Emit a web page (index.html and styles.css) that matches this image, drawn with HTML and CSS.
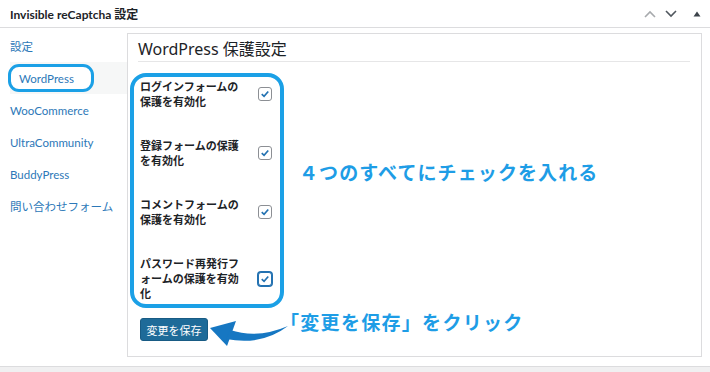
FILE: index.html
```html
<!DOCTYPE html>
<html lang="ja">
<head>
<meta charset="utf-8">
<title>Invisible reCaptcha 設定</title>
<link rel="stylesheet" href="styles.css">
</head>
<body>
<div class="postbox">
  <div class="postbox-header">
    <h2 class="postbox-title">Invisible reCaptcha 設定</h2>
    <div class="handle-actions">
      <svg class="hicon up" width="12" height="8" viewBox="0 0 12 8"><path d="M1 7 L6 2 L11 7" fill="none" stroke="#a7aaad" stroke-width="1.6"/></svg>
      <svg class="hicon down" width="12" height="8" viewBox="0 0 12 8"><path d="M1 1 L6 6 L11 1" fill="none" stroke="#50575e" stroke-width="1.6"/></svg>
      <svg class="hicon tri" width="8" height="6" viewBox="0 0 8 6"><path d="M0.5 5.5 L4 0.5 L7.5 5.5 Z" fill="#3c434a"/></svg>
    </div>
  </div>
  <div class="postbox-body">
    <ul class="tabs">
      <li class="tab"><a href="#">設定</a></li>
      <li class="tab active"><a href="#">WordPress</a></li>
      <li class="tab"><a href="#">WooCommerce</a></li>
      <li class="tab"><a href="#">UltraCommunity</a></li>
      <li class="tab"><a href="#">BuddyPress</a></li>
      <li class="tab"><a href="#">問い合わせフォーム</a></li>
    </ul>
    <div class="panel">
      <h3 class="panel-title">WordPress 保護設定</h3>
      <div class="form-table">
        <div class="row">
          <div class="label">ログインフォームの保護を有効化</div>
          <span class="cb"><svg viewBox="0 0 14 14" width="14" height="14"><path d="M3.2 7.2 L5.9 9.8 L10.8 4" fill="none" stroke="#2271b1" stroke-width="1.9"/></svg></span>
        </div>
        <div class="row">
          <div class="label">登録フォームの保護を有効化</div>
          <span class="cb"><svg viewBox="0 0 14 14" width="14" height="14"><path d="M3.2 7.2 L5.9 9.8 L10.8 4" fill="none" stroke="#2271b1" stroke-width="1.9"/></svg></span>
        </div>
        <div class="row">
          <div class="label">コメントフォームの保護を有効化</div>
          <span class="cb"><svg viewBox="0 0 14 14" width="14" height="14"><path d="M3.2 7.2 L5.9 9.8 L10.8 4" fill="none" stroke="#2271b1" stroke-width="1.9"/></svg></span>
        </div>
        <div class="row">
          <div class="label">パスワード再発行フォームの保護を有効化</div>
          <span class="cb focus"><svg viewBox="0 0 14 14" width="14" height="14"><path d="M3.2 7.2 L5.9 9.8 L10.8 4" fill="none" stroke="#2271b1" stroke-width="1.9"/></svg></span>
        </div>
      </div>
      <button class="button-primary" type="button">変更を保存</button>
    </div>
  </div>
  <div class="anno-box"></div>
  <div class="anno-text anno-text-1">４つのすべてにチェックを入れる</div>
  <div class="anno-text anno-text-2">「変更を保存」をクリック</div>
  <svg class="anno-arrow" width="95" height="45" viewBox="0 0 95 45">
    <path d="M10 13 L36 6 L27 31 Z" fill="#1677c2"/>
    <path d="M30 15 Q58 24 88 11 Q62 31 26 24 Z" fill="#1677c2"/>
  </svg>
</div>
</body>
</html>
```
FILE: styles.css
```css
* { box-sizing: border-box; }
html, body {
  margin: 0;
  padding: 0;
  background: #f0f0f1;
  font-family: Lato, "Noto Sans CJK JP", sans-serif;
  color: #1d2327;
}
.postbox {
  position: relative;
  width: 710px;
  background: #fff;
  border-bottom: 1px solid #dcdcde;
  padding-bottom: 9px;
}
.postbox-header {
  height: 28px;
  border-bottom: 1px solid #dcdcde;
  display: flex;
  align-items: center;
  justify-content: space-between;
  padding: 0 9px 0 10px;
}
.postbox-title {
  margin: 0;
  font-size: 12px;
  font-weight: 700;
}
.handle-actions {
  display: flex;
  align-items: center;
  gap: 9px;
}
.hicon.tri { margin-left: 7px; }
.postbox-body {
  display: flex;
  align-items: flex-start;
}
.tabs {
  list-style: none;
  margin: 2px 0 0;
  padding: 0;
  width: 127px;
  flex: none;
}
.tab {
  height: 32px;
  display: flex;
  align-items: center;
}
.tab a {
  color: #2c78b8;
  text-decoration: none;
  font-size: 11.5px;
  padding-left: 10px;
}
.tab.active {
  margin-left: 10px;
  background: #f6f7f7;
}
.tab.active a {
  margin-left: -2px;
  width: 86px;
  height: 28px;
  border: 3px solid #1ba0e6;
  border-radius: 11px;
  background: #fff;
  display: flex;
  align-items: center;
  padding-left: 8px;
}
.panel {
  flex: 1;
  margin: 5px 8px 0 0;
  border: 1px solid #dcdcde;
  padding: 5px 11px 15px 10px;
}
.panel-title {
  margin: 0;
  font-family: "Noto Sans", "Noto Sans CJK JP", sans-serif;
  font-size: 16px;
  font-weight: 400;
  line-height: 20px;
  padding-bottom: 2px;
  border-bottom: 1px solid #e6e6e7;
  color: #1d2327;
}
.form-table {
  margin-top: 3px;
  padding-left: 2px;
}
.row {
  display: flex;
  align-items: center;
  gap: 14px;
  padding: 14px 0 15px;
}
.label {
  width: 104px;
  font-size: 11px;
  line-height: 15px;
  font-weight: 700;
  font-family: "Noto Sans CJK JP", sans-serif;
  color: #1d2327;
}
.cb {
  width: 14px;
  height: 14px;
  border: 1px solid #8c8f94;
  border-radius: 3px;
  display: flex;
  align-items: center;
  justify-content: center;
  background: #fff;
}
.cb svg { display: block; }
.cb.focus {
  border-color: #2271b1;
  box-shadow: 0 0 0 1px #2271b1;
}
.button-primary {
  margin: 2px 0 0 2px;
  height: 23px;
  width: 68px;
  padding: 0;
  background: #1e6b99;
  border: 1px solid #185b84;
  border-radius: 3px;
  color: #fff;
  font-family: "Noto Sans CJK JP", sans-serif;
  font-size: 11px;
}
.anno-box {
  position: absolute;
  left: 130px;
  top: 73px;
  width: 154px;
  height: 235px;
  border: 4px solid #1ba0e6;
  border-radius: 16px;
}
.anno-text {
  position: absolute;
  font-family: "Noto Sans CJK JP", sans-serif;
  font-weight: 700;
  color: #1e9de6;
  white-space: nowrap;
  line-height: 24px;
}
.anno-text-1 {
  left: 299px;
  top: 160px;
  font-size: 19px;
  letter-spacing: 1.1px;
}
.anno-text-2 {
  left: 280px;
  top: 310px;
  font-size: 19px;
  letter-spacing: 1.3px;
}
.anno-arrow {
  position: absolute;
  left: 200px;
  top: 315px;
}
```
